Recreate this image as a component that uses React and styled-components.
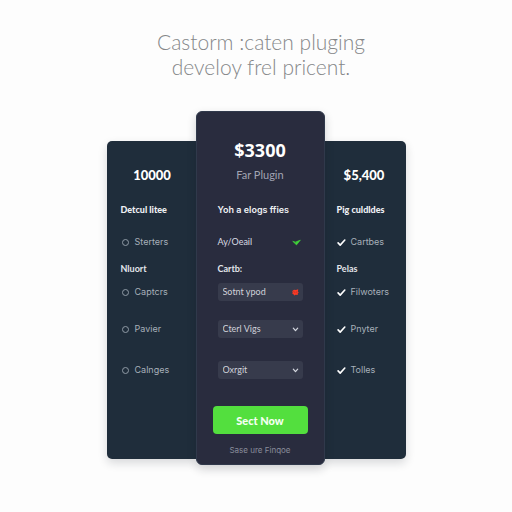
import React from "react";
import styled, { createGlobalStyle } from "styled-components";

const GlobalStyle = createGlobalStyle`
  *, *::before, *::after { box-sizing: border-box; }
  body { margin: 0; background: #fdfdfd; font-family: Lato, "Open Sans", sans-serif; }
  h1, h2, h3, p { margin: 0; padding: 0; }
  button, input, select { font-family: inherit; }
`;

const Page = styled.main`
  min-height: 100vh;
  padding: 29px 16px;
  display: flex;
  flex-direction: column;
  align-items: center;
`;

const Title = styled.h1`
  max-width: 240px;
  margin-bottom: 32px;
  padding-left: 10px;
  color: #858789;
  font-family: Lato, sans-serif;
  font-size: 21px;
  font-weight: 300;
  line-height: 25px;
  text-align: center;
`;

const Plans = styled.div`
  width: 100%;
  max-width: 299px;
  display: grid;
  grid-template-columns: minmax(0, 89fr) minmax(0, 129fr) minmax(0, 81fr);
`;

const SideCard = styled.section`
  margin: 30px 0 6px;
  padding: 20px ${(p) => (p.$end ? 0 : 12)}px 0 ${(p) => (p.$end ? 12 : 14)}px;
  background: #1f2d3b;
  border-radius: ${(p) => (p.$end ? "0 5px 5px 0" : "5px 0 0 5px")};
  box-shadow: 0 4px 10px rgba(20, 25, 35, 0.16);
`;

const MainCard = styled.section`
  position: relative;
  padding: 24px 16px 6px;
  background: #292c3e;
  border: 1px solid #30394b;
  border-radius: 6px;
  box-shadow: 0 4px 10px rgba(20, 25, 35, 0.2);
`;

const Price = styled.h2`
  padding-right: ${(p) => (p.$end ? 14 : 0)}px;
  color: #fff;
  font-family: ${(p) => (p.$large ? '"Noto Sans"' : "Lato")}, sans-serif;
  font-size: ${(p) => (p.$large ? 18 : 13)}px;
  font-weight: ${(p) => (p.$large ? 700 : 900)};
  line-height: 28px;
  text-align: center;
`;

const Subtitle = styled.p`
  margin-bottom: 13px;
  color: #a2a4b3;
  font-size: 11px;
  line-height: 22px;
  text-align: center;
`;

const Heading = styled.h3`
  margin: 10px ${(p) => (p.$wide ? 5 : 0)}px 0;
  padding-top: 1px;
  color: #eef0f4;
  font-family: ${(p) => (p.$wide ? "Inter" : "Lato")}, sans-serif;
  font-size: 9px;
  font-weight: ${(p) => (p.$wide ? 600 : 900)};
  line-height: 20px;
  white-space: nowrap;
`;

const Options = styled.div`
  display: grid;
  grid-template-columns: minmax(0, 1fr);
  grid-template-rows: 44px 10px 36px 38px 44px;
  align-items: center;
  padding: 0 ${(p) => (p.$inset ? 5 : 0)}px;
`;

const GroupLabel = styled.h3`
  color: #e3e6eb;
  font-size: 9px;
  font-weight: 700;
  line-height: 10px;
`;

const Option = styled.label`
  display: flex;
  align-items: center;
  gap: 5px;
  color: #a7b0ba;
  font-family: Inter, sans-serif;
  font-size: 9px;
  line-height: 20px;
`;

const Radio = styled.input`
  appearance: none;
  width: 7px;
  height: 7px;
  margin: 0 1px;
  border: 1px solid #909ba6;
  border-radius: 50%;
  &:checked { background: #909ba6; }
`;

const CheckWrap = styled.span`
  display: grid;
  width: 9px;
  height: 9px;
  & > * { grid-area: 1 / 1; }
`;

const CheckInput = styled.input`
  appearance: none;
  width: 9px;
  height: 9px;
  margin: 0;
  & + svg { visibility: hidden; pointer-events: none; }
  &:checked + svg { visibility: visible; }
`;

const Status = styled.div`
  display: flex;
  justify-content: space-between;
  align-items: center;
  padding-right: 2px;
  color: #d9dbe3;
  font-size: 9px;
  line-height: 20px;
`;

const Field = styled.div`
  display: flex;
  align-items: center;
  gap: 2px;
  height: 18px;
  padding: 0 3px 0 5px;
  background: #373b4c;
  border-radius: 3px;
`;

const TextInput = styled.input`
  flex: 1;
  min-width: 0;
  padding: 0;
  border: 0;
  background: transparent;
  color: #d0d2da;
  font-size: 9px;
  line-height: 16px;
`;

const SelectField = styled(Field)`
  display: grid;
  grid-template-columns: minmax(0, 1fr) 9px;
  & > svg { grid-area: 1 / 2; pointer-events: none; }
`;

const Select = styled.select`
  appearance: none;
  grid-area: 1 / 1 / 2 / 3;
  min-width: 0;
  padding: 0;
  border: 0;
  background: transparent;
  color: #d0d2da;
  font-size: 9px;
  line-height: 16px;
`;

const BuyButton = styled.button`
  display: block;
  width: 100%;
  height: 28px;
  margin-top: 14px;
  padding: 0;
  border: 0;
  border-radius: 4px;
  background: #53df3e;
  color: #f5fff2;
  font-size: 11px;
  font-weight: 900;
  cursor: pointer;
`;

const Note = styled.p`
  margin-top: 8px;
  color: #898c9b;
  font-family: Inter, sans-serif;
  font-size: 8px;
  line-height: 16px;
  text-align: center;
`;

const Tick = () => (
  <svg width="9" height="9" viewBox="0 0 9 9" fill="none" aria-hidden="true">
    <path d="M1.1 4.9 3.2 7.1 7.8 2" stroke="#fff" strokeWidth="1.6" strokeLinecap="round" strokeLinejoin="round" />
  </svg>
);

const GreenTick = () => (
  <svg width="9" height="9" viewBox="0 0 9 9" fill="none" aria-hidden="true">
    <path d="M.7 3.3 3.6 4 8.4 2.1 4.5 6.9Z" fill="#42d43b" stroke="#42d43b" strokeWidth=".6" strokeLinejoin="round" />
    <path d="m2.5 3.6 1.7.8" stroke="#27732f" strokeWidth=".6" />
  </svg>
);

const RedMark = () => (
  <svg width="9" height="9" viewBox="0 0 9 9" fill="none" aria-hidden="true">
    <path d="M1.3 3.1 3 1.8l2 .3 2.2-.8-.3 2.3.8 1-1 1.1.1 1.3-2.2-.3-1.4.8-.9-1.6-1.2-.3.6-1.1Z" fill="#f93a24" />
    <path d="m2.4 3.5 1.4.8M5 4.8l.8-1.3" stroke="#8c2930" strokeWidth=".6" />
  </svg>
);

const Chevron = () => (
  <svg width="9" height="9" viewBox="0 0 9 9" fill="none" aria-hidden="true">
    <path d="M2.3 3.1 4.5 5.7 6.7 3.1" stroke="#d5d8e0" strokeWidth="1.2" strokeLinecap="round" strokeLinejoin="round" />
  </svg>
);

const RadioOption = ({ children }) => (
  <Option>
    <Radio type="radio" name="starter-feature" />
    {children}
  </Option>
);

const CheckOption = ({ children }) => (
  <Option>
    <CheckWrap>
      <CheckInput type="checkbox" defaultChecked />
      <Tick />
    </CheckWrap>
    {children}
  </Option>
);

const Dropdown = ({ label }) => (
  <SelectField>
    <Select aria-label={label}>
      <option>{label}</option>
    </Select>
    <Chevron />
  </SelectField>
);

export default function App() {
  return (
    <>
      <GlobalStyle />
      <Page>
        <Title>Castorm :caten pluging develoy frel pricent.</Title>
        <Plans>
          <SideCard>
            <Price>10000</Price>
            <Heading>Detcul litee</Heading>
            <Options>
              <RadioOption>Sterters</RadioOption>
              <GroupLabel>Nluort</GroupLabel>
              <RadioOption>Captcrs</RadioOption>
              <RadioOption>Pavier</RadioOption>
              <RadioOption>Calnges</RadioOption>
            </Options>
          </SideCard>
          <MainCard>
            <Price $large>$3300</Price>
            <Subtitle>Far Plugin</Subtitle>
            <Heading $wide>Yoh a elogs ffies</Heading>
            <Options $inset>
              <Status>
                Ay/Oeail
                <GreenTick />
              </Status>
              <GroupLabel as="label" htmlFor="period">Cartb:</GroupLabel>
              <Field>
                <TextInput id="period" type="text" defaultValue="Sotnt ypod" />
                <RedMark />
              </Field>
              <Dropdown label="Cterl Vigs" />
              <Dropdown label="Oxrgit" />
            </Options>
            <BuyButton type="button">Sect Now</BuyButton>
            <Note>Sase ure Finqoe</Note>
          </MainCard>
          <SideCard $end>
            <Price $end>$5,400</Price>
            <Heading>Pig culdldes</Heading>
            <Options>
              <CheckOption>Cartbes</CheckOption>
              <GroupLabel>Pelas</GroupLabel>
              <CheckOption>Filwoters</CheckOption>
              <CheckOption>Pnyter</CheckOption>
              <CheckOption>Tolles</CheckOption>
            </Options>
          </SideCard>
        </Plans>
      </Page>
    </>
  );
}
